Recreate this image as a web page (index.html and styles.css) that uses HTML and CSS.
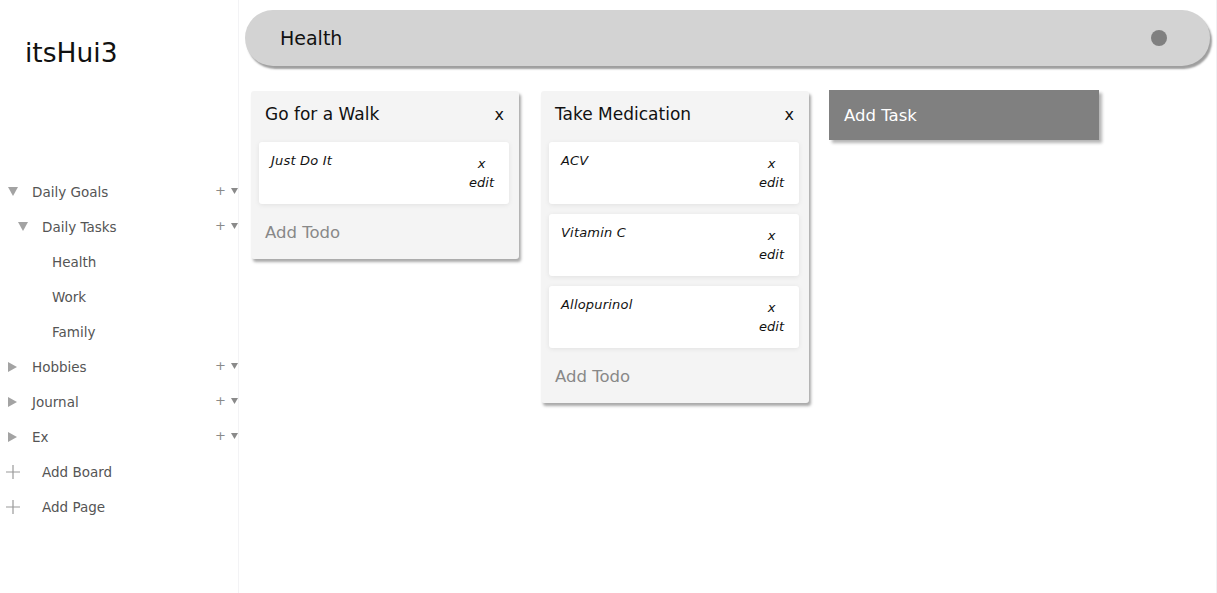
FILE: index.html
```html
<!DOCTYPE html>
<html>
<head>
<meta charset="utf-8">
<link rel="stylesheet" href="styles.css">
</head>
<body>
<aside class="sidebar">
  <div class="brand">itsHui3</div>
  <nav class="nav">
    <div class="row">
      <span class="tw"><svg width="10" height="9" viewBox="0 0 10 9"><path d="M0 0H10L5 9Z" fill="#a3a3a3"/></svg></span>
      <span class="label">Daily Goals</span>
      <span class="acts">+ <svg width="7" height="6" viewBox="0 0 7 6"><path d="M0 0H7L3.5 6Z" fill="#8a8a8a"/></svg></span>
    </div>
    <div class="row d1">
      <span class="tw"><svg width="10" height="9" viewBox="0 0 10 9"><path d="M0 0H10L5 9Z" fill="#a3a3a3"/></svg></span>
      <span class="label">Daily Tasks</span>
      <span class="acts">+ <svg width="7" height="6" viewBox="0 0 7 6"><path d="M0 0H7L3.5 6Z" fill="#8a8a8a"/></svg></span>
    </div>
    <div class="row page"><span class="label">Health</span></div>
    <div class="row page"><span class="label">Work</span></div>
    <div class="row page"><span class="label">Family</span></div>
    <div class="row">
      <span class="tw"><svg width="10" height="10" viewBox="0 0 10 10"><path d="M0 0V10L9 5Z" fill="#a3a3a3"/></svg></span>
      <span class="label">Hobbies</span>
      <span class="acts">+ <svg width="7" height="6" viewBox="0 0 7 6"><path d="M0 0H7L3.5 6Z" fill="#8a8a8a"/></svg></span>
    </div>
    <div class="row">
      <span class="tw"><svg width="10" height="10" viewBox="0 0 10 10"><path d="M0 0V10L9 5Z" fill="#a3a3a3"/></svg></span>
      <span class="label">Journal</span>
      <span class="acts">+ <svg width="7" height="6" viewBox="0 0 7 6"><path d="M0 0H7L3.5 6Z" fill="#8a8a8a"/></svg></span>
    </div>
    <div class="row">
      <span class="tw"><svg width="10" height="10" viewBox="0 0 10 10"><path d="M0 0V10L9 5Z" fill="#a3a3a3"/></svg></span>
      <span class="label">Ex</span>
      <span class="acts">+ <svg width="7" height="6" viewBox="0 0 7 6"><path d="M0 0H7L3.5 6Z" fill="#8a8a8a"/></svg></span>
    </div>
    <div class="row add">
      <span class="plus"><svg width="14" height="14" viewBox="0 0 14 14"><path d="M7 0V14M0 7H14" stroke="#9a9a9a" stroke-width="1.2"/></svg></span>
      <span class="label">Add Board</span>
    </div>
    <div class="row add">
      <span class="plus"><svg width="14" height="14" viewBox="0 0 14 14"><path d="M7 0V14M0 7H14" stroke="#9a9a9a" stroke-width="1.2"/></svg></span>
      <span class="label">Add Page</span>
    </div>
  </nav>
</aside>
<main class="main">
  <header class="bar">
    <span class="bar-title">Health</span>
    <span class="dot"></span>
  </header>
  <section class="board">
    <div class="card">
      <div class="card-head"><span>Go for a Walk</span><span class="close">x</span></div>
      <div class="todo">
        <span class="todo-text">Just Do It</span>
        <span class="todo-acts"><span>x</span><span>edit</span></span>
      </div>
      <div class="add-todo">Add Todo</div>
    </div>
    <div class="card">
      <div class="card-head"><span>Take Medication</span><span class="close">x</span></div>
      <div class="todo">
        <span class="todo-text">ACV</span>
        <span class="todo-acts"><span>x</span><span>edit</span></span>
      </div>
      <div class="todo">
        <span class="todo-text">Vitamin C</span>
        <span class="todo-acts"><span>x</span><span>edit</span></span>
      </div>
      <div class="todo">
        <span class="todo-text">Allopurinol</span>
        <span class="todo-acts"><span>x</span><span>edit</span></span>
      </div>
      <div class="add-todo">Add Todo</div>
    </div>
    <div class="add-task">Add Task</div>
  </section>
</main>
</body>
</html>
```

FILE: styles.css
```css
html, body {
  margin: 0;
  padding: 0;
  height: 100%;
}
body {
  font-family: "DejaVu Sans", Verdana, sans-serif;
  display: flex;
  background: #fff;
  color: #111;
  overflow: hidden;
}
.sidebar {
  width: 238px;
  flex: none;
  border-right: 1px solid #f3f3f5;
  height: 593px;
}
.brand {
  font-size: 26.5px;
  line-height: 36px;
  margin: 35px 0 0 25px;
  color: #111;
}
.nav {
  margin-top: 103px;
}
.row {
  height: 35px;
  display: flex;
  align-items: center;
  font-size: 13.5px;
  color: #555;
}
.tw {
  width: 32px;
  padding-left: 8px;
  display: flex;
  align-items: center;
  flex: none;
  box-sizing: border-box;
}
.row.d1 .tw {
  padding-left: 18px;
  width: 42px;
}
.row.page {
  padding-left: 52px;
}
.row.add .plus {
  width: 42px;
  padding-left: 6px;
  box-sizing: border-box;
  display: flex;
  align-items: center;
  flex: none;
}
.label {
  flex: 1;
}
.acts {
  font-size: 13px;
  color: #8a8a8a;
  display: flex;
  align-items: center;
  gap: 5px;
  margin-top: -2px;
}
.main {
  flex: 1;
  padding: 10px 3px 0 6px;
  border-right: 1px solid #f0f0f3;
  min-width: 0;
}
.bar {
  height: 56px;
  background: #d3d3d3;
  border-radius: 28px;
  box-shadow: 2px 3px 2px #9e9e9e;
  display: flex;
  align-items: center;
  padding: 0 43px 0 35px;
  width: 965px;
  box-sizing: border-box;
}
.bar-title {
  flex: 1;
  font-size: 19px;
  color: #111;
}
.dot {
  width: 16px;
  height: 16px;
  border-radius: 50%;
  background: #808080;
}
.board {
  display: flex;
  align-items: flex-start;
  padding: 25px 0 0 6px;
}
.card {
  width: 268px;
  box-sizing: border-box;
  background: #f4f4f4;
  border-radius: 3px;
  box-shadow: 2px 3px 3px #a9a9a9;
  padding: 0 10px 8px 8px;
  margin-right: 22px;
  display: flex;
  flex-direction: column;
}
.card-head {
  height: 46px;
  margin-bottom: 5px;
  display: flex;
  align-items: center;
  justify-content: space-between;
  padding: 0 5px 0 6px;
  font-size: 17px;
  color: #111;
}
.close {
  font-size: 16px;
}
.todo {
  height: 62px;
  box-sizing: border-box;
  background: #fff;
  border-radius: 3px;
  box-shadow: 0 1px 5px rgba(0,0,0,0.08);
  margin-bottom: 10px;
  display: flex;
  justify-content: space-between;
  align-items: flex-start;
  padding: 11px 15px 0 12px;
  font-style: italic;
  font-size: 13px;
  color: #111;
}
.todo-text {
  line-height: 16px;
  letter-spacing: 0.2px;
}
.todo-acts {
  display: flex;
  flex-direction: column;
  align-items: center;
  line-height: 19px;
  margin-top: 1px;
}
.add-todo {
  height: 37px;
  line-height: 35px;
  padding-top: 1px;
  box-sizing: border-box;
  padding-left: 6px;
  font-size: 16.5px;
  color: #888;
}
.add-task {
  width: 270px;
  height: 50px;
  box-sizing: border-box;
  background: #808080;
  color: #fff;
  font-size: 16.5px;
  display: flex;
  align-items: center;
  padding-left: 15px;
  margin: -1px 0 0 -2px;
  box-shadow: 3px 3px 3px #b5b5b5;
}
```
